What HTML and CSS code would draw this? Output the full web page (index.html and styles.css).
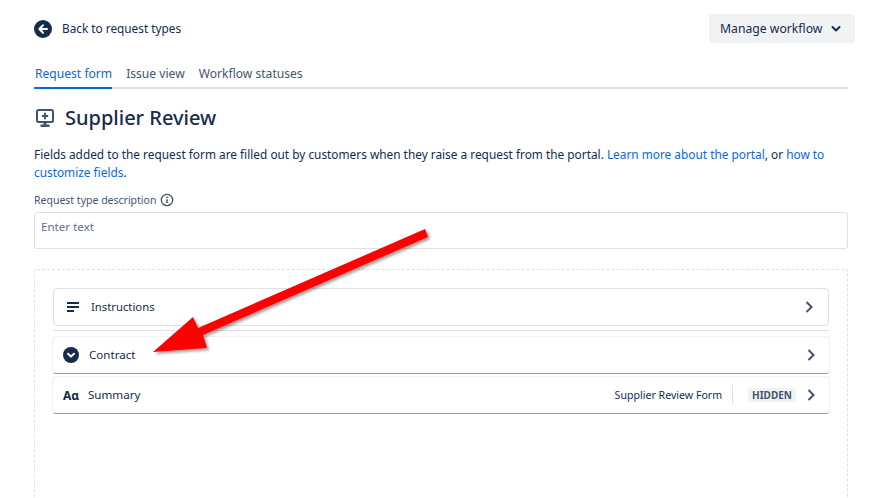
FILE: index.html
```html
<!DOCTYPE html>
<html lang="en">
<head>
    <meta charset="UTF-8">
    <meta name="viewport" content="width=device-width, initial-scale=1.0">
    <title>Supplier Review</title>
    <link rel="stylesheet" href="styles.css">
</head>
<body>
    <div class="page">
        <div class="topbar">
            <a class="back-link">
                <svg class="back-icon" width="18" height="18" viewBox="0 0 18 18">
                    <circle cx="9" cy="9" r="9" fill="#172b4d"/>
                    <path d="M9 5.2 5.4 9 9 12.800M5.800 9H13" fill="none" stroke="#fff" stroke-width="2" stroke-linecap="round" stroke-linejoin="round"/>
                </svg>
                <span class="back-text">Back to request types</span>
            </a>
            <button class="manage-button">
                Manage workflow
                <svg width="10" height="8" viewBox="0 0 10 8">
                    <path d="M1.500 2 5 5.500 8.500 2" fill="none" stroke="#172b4d" stroke-width="2" stroke-linecap="round" stroke-linejoin="round"/>
                </svg>
            </button>
        </div>

        <div class="tabs">
            <a class="tab tab-active">Request form</a>
            <a class="tab">Issue view</a>
            <a class="tab">Workflow statuses</a>
        </div>

        <div class="title-row">
            <svg width="18" height="18" viewBox="0 0 18 18">
                <rect x="1" y="1" width="16" height="12" rx="1.500" fill="none" stroke="#44546f" stroke-width="2"/>
                <path d="M9 3.800v6.400M5.800 7h6.400" stroke="#44546f" stroke-width="2"/>
                <path d="M7.500 13h3v2.500h-3zM4.500 15.500h9V18h-9z" fill="#44546f"/>
            </svg>
            <h1>Supplier Review</h1>
        </div>

        <p class="intro">Fields added to the request form are filled out by customers when they raise a request from the portal. <a>Learn more about the portal</a>, or <a>how to customize fields</a>.</p>

        <div class="field-label">
            Request type description
            <svg width="14" height="14" viewBox="0 0 14 14">
                <circle cx="7" cy="7" r="5.700" fill="none" stroke="#44546f" stroke-width="1.300"/>
                <path d="M7 6.300v3.800" stroke="#44546f" stroke-width="1.500"/>
                <circle cx="7" cy="4.300" r="0.900" fill="#44546f"/>
            </svg>
        </div>
        <div class="text-input">Enter text</div>

        <div class="dropzone">
            <div class="field-row field-row-plain">
                <svg class="row-icon" width="14" height="12" viewBox="0 0 14 12">
                    <path d="M1 2h12M1 6h12M1 10h7" stroke="#172b4d" stroke-width="2"/>
                </svg>
                <span class="row-name row-name-wide">Instructions</span>
                <svg class="chevron" width="10" height="14" viewBox="0 0 10 14">
                    <path d="M2.500 2 7.500 7 2.500 12" fill="none" stroke="#44546f" stroke-width="2"/>
                </svg>
            </div>
            <div class="row-divider"></div>
            <div class="field-row">
                <svg class="row-icon" width="16" height="16" viewBox="0 0 16 16">
                    <circle cx="8" cy="8" r="8" fill="#172b4d"/>
                    <path d="M5 6.800 8 9.600 11 6.800" fill="none" stroke="#fff" stroke-width="2" stroke-linecap="round" stroke-linejoin="round"/>
                </svg>
                <span class="row-name">Contract</span>
                <svg class="chevron" width="10" height="14" viewBox="0 0 10 14">
                    <path d="M2.500 2 7.500 7 2.500 12" fill="none" stroke="#44546f" stroke-width="2"/>
                </svg>
            </div>
            <div class="field-row field-row-last">
                <span class="row-icon type-icon">Aɑ</span>
                <span class="row-name">Summary</span>
                <span class="row-form">Supplier Review Form</span>
                <span class="row-sep"></span>
                <span class="badge">HIDDEN</span>
                <svg class="chevron" width="10" height="14" viewBox="0 0 10 14">
                    <path d="M2.500 2 7.500 7 2.500 12" fill="none" stroke="#44546f" stroke-width="2"/>
                </svg>
            </div>
        </div>
    </div>

    <!-- red annotation drawn over the screenshot -->
    <svg class="annotation" width="894" height="498" viewBox="0 0 894 498">
        <defs>
            <filter id="arrow-shadow" x="-10%" y="-10%" width="120%" height="130%">
                <feDropShadow dx="2" dy="2" stdDeviation="1.500" flood-color="#000" flood-opacity="0.4"/>
            </filter>
        </defs>
        <path d="M425 229 428 237 203 335 207 348 153 352 193 317 198 328Z" fill="#fe0000" filter="url(#arrow-shadow)"/>
    </svg>
</body>
</html>
```

FILE: styles.css
```css
html, body {
    height: 100%;
}
body {
    font-family: "Noto Sans", Arial, sans-serif;
    font-size: 11.850px;
    color: #172b4d;
    background-color: #fff;
    margin: 0;
    overflow: hidden;
    position: relative;
}
.page {
    width: 814px;
    padding: 14px 0 0 34px;
}
.topbar {
    display: flex;
    justify-content: space-between;
    align-items: center;
    width: 821px;
    height: 29px;
}
.back-link {
    display: flex;
    align-items: center;
    gap: 10px;
}
.back-text {
    padding-bottom: 2px;
    font-size: 11.800px;
}
.manage-button {
    display: flex;
    align-items: center;
    gap: 9px;
    width: 146px;
    height: 29px;
    padding: 0 0 0 11px;
    border: none;
    border-radius: 3px;
    background-color: #f1f2f4;
    color: #172b4d;
    font-family: inherit;
    font-size: 12.200px;
}
.tabs {
    display: flex;
    gap: 14px;
    margin-top: 21px;
    border-bottom: 2px solid #dcdfe4;
    height: 23px;
}
.tab {
    color: #44546f;
    line-height: 20px;
    height: 23px;
    font-size: 12.100px;
}
.tab-active {
    padding-left: 1px;
    color: #0c66e4;
    border-bottom: 2px solid #0c66e4;
}
.title-row {
    display: flex;
    align-items: center;
    gap: 11px;
    margin: 13px 0 0 2px;
    height: 32px;
}
h1 {
    margin: 0;
    font-size: 20px;
    font-weight: 500;
    line-height: 32px;
}
.intro {
    margin: 11px 0 0;
    line-height: 18px;
}
.intro a {
    color: #0c66e4;
}
.field-label {
    display: flex;
    align-items: center;
    gap: 4px;
    margin-top: 10px;
    height: 18px;
    font-size: 10.500px;
    color: #44546f;
}
.text-input {
    box-sizing: border-box;
    height: 37px;
    margin-top: 3px;
    padding: 5px 6px;
    border: 1px solid #dfe1e6;
    border-radius: 3px;
    color: #626f86;
    font-size: 11.600px;
    line-height: 18px;
}
.dropzone {
    box-sizing: border-box;
    height: 229px;
    margin-top: 20px;
    padding: 18px 18px 0;
    border: 1px dashed #dfe1e6;
    border-bottom: none;
    border-radius: 3px 3px 0 0;
}
.field-row {
    display: flex;
    align-items: center;
    box-sizing: border-box;
    height: 38px;
    margin: 0 -1px;
    padding: 0 13px 0 10px;
    border: 1px solid #f1f2f4;
    border-bottom: 1px solid #9aa1af;
    border-radius: 4px;
    font-size: 11.600px;
}
.field-row-plain {
    margin: 0;
    padding: 0 14px 0 12px;
    border: 1px solid #dfe1e6;
}
.field-row-last {
    margin-top: 2px;
}
.row-divider {
    height: 1px;
    margin: 4px 0 5px;
    background-color: #dfe1e6;
}
.row-icon {
    flex: none;
}
.row-name {
    flex: 1;
    margin-left: 10px;
    padding-bottom: 2px;
}
.row-name-wide {
    margin-left: 11px;
    font-size: 11.300px;
}
.type-icon {
    width: 15px;
    font-weight: 700;
    font-size: 12px;
}
.row-form {
    font-size: 10.600px;
}
.row-sep {
    width: 1px;
    height: 20px;
    margin: 0 15px 0 10px;
    background-color: #dfe1e6;
}
.badge {
    padding: 0 4px;
    border-radius: 3px;
    background-color: #f1f2f4;
    color: #44546f;
    font-size: 10px;
    font-weight: 700;
    line-height: 14px;
}
.chevron {
    margin-left: 10px;
}
.annotation {
    position: absolute;
    left: 0;
    top: 0;
}
```
